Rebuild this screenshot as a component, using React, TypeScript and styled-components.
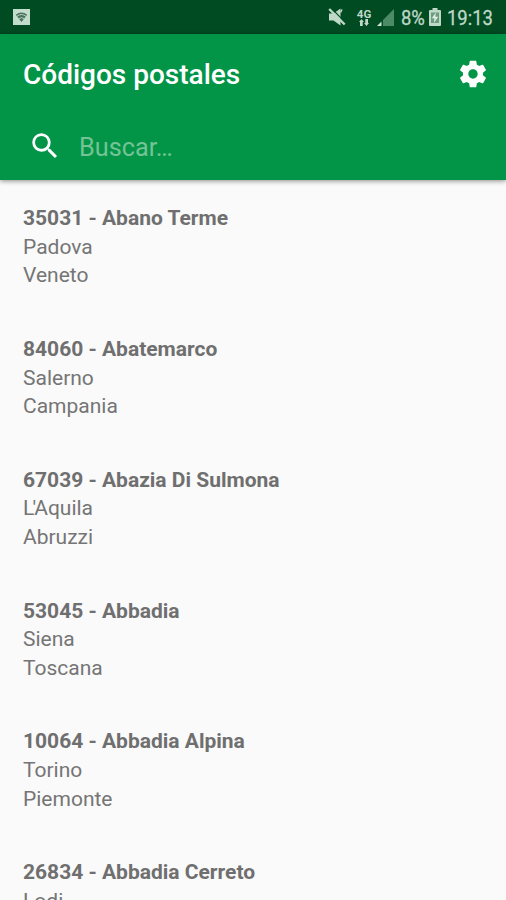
import React from "react";
import styled, { createGlobalStyle } from "styled-components";

const GlobalStyle = createGlobalStyle`
  * { box-sizing: border-box; }
  html, body { margin: 0; height: 100%; overflow: hidden; background: #fafafa; }
  body { font-family: Roboto, sans-serif; }
`;

const Screen = styled.div`
  width: 506px;
  height: 900px;
  overflow: hidden;
  display: flex;
  flex-direction: column;
  background: #fafafa;
`;

const StatusBar = styled.div`
  flex: none;
  height: 34px;
  padding: 0 12px 0 13px;
  display: flex;
  align-items: center;
  background: #004b22;
  color: #bfd8c8;
  svg { display: block; flex: none; }
`;

const Spacer = styled.div<{ $w?: number }>`
  flex: ${(p) => (p.$w ? `0 0 ${p.$w}px` : "1")};
`;

const StatusText = styled.span<{ $width: number }>`
  width: ${(p) => p.$width}px;
  font-size: 20.5px;
  line-height: 34px;
  padding-top: 2px;
  white-space: nowrap;
  transform: scaleX(0.9);
  transform-origin: left center;
  -webkit-text-stroke: 0.3px currentColor;
`;

const Network = styled.div`
  width: 16px;
  display: flex;
  flex-direction: column;
  align-items: center;
  font-size: 11.5px;
  font-weight: 700;
  line-height: 10px;
`;

const Header = styled.header`
  flex: none;
  height: 146px;
  background: #029548;
  color: #fff;
  box-shadow: 0 1px 5px rgba(0, 0, 0, 0.45);
`;

const TitleRow = styled.div`
  height: 79px;
  padding: 0 17px 0 23px;
  display: flex;
  align-items: center;
  justify-content: space-between;
`;

const Title = styled.h1`
  margin: 0;
  padding-top: 2px;
  font-size: 28px;
  font-weight: 500;
`;

const SearchRow = styled.label`
  height: 66px;
  padding: 0 28px;
  display: flex;
  align-items: center;
  gap: 17px;
`;

const SearchInput = styled.input`
  flex: 1;
  height: 40px;
  margin-top: 3px;
  padding: 0;
  border: 0;
  outline: 0;
  background: transparent;
  color: #fff;
  font: 400 25.3px Roboto, sans-serif;
  &::placeholder { color: #74c394; opacity: 1; }
`;

const IconButton = styled.button`
  padding: 0;
  border: 0;
  background: none;
  color: #fff;
  svg { display: block; }
`;

const List = styled.ul`
  margin: 0;
  padding: 24.2px 23px 0;
  list-style: none;
`;

const Item = styled.li`
  height: 130.8px;
  color: #757575;
  font-size: 21px;
  line-height: 28.6px;
  white-space: nowrap;
`;

const Name = styled.div`
  font-weight: 700;
  color: #6f6f6f;
`;

const TightPair = styled.span`
  letter-spacing: -1.9px;
`;

const places = [
  ["35031", "Abano Terme", "Padova", "Veneto"],
  ["84060", "Abatemarco", "Salerno", "Campania"],
  ["67039", "Abazia Di Sulmona", "L'Aquila", "Abruzzi"],
  ["53045", "Abbadia", "Siena", "Toscana"],
  ["10064", "Abbadia Alpina", "Torino", "Piemonte"],
  ["26834", "Abbadia Cerreto", "Lodi"],
];

// Tightens an elided article so that the apostrophe sits close to its neighbours.
const Province = ({ name }: { name: string }) =>
  name.startsWith("L'") ? (
    <div>
      <TightPair>L'</TightPair>
      {name.slice(2)}
    </div>
  ) : (
    <div>{name}</div>
  );

const WifiBadge = () => (
  <svg width="17" height="16" viewBox="0 0 17 16">
    <rect width="17" height="16" fill="#c3ddcd" />
    <path d="M2.8 5.8Q8.5 1.2 14.2 5.8L8.5 13Z" fill="#49735a" />
    <path d="M4 7.3Q8.5 3.7 13 7.3M6 9.6Q8.5 7.8 11 9.6" fill="none" stroke="#c3ddcd" strokeWidth="0.9" />
  </svg>
);

const MuteIcon = () => (
  <svg width="18" height="18" viewBox="0 0 18 18">
    <path d="M1 5.5H5.5L12.5 0.5V17.5L5.5 12.5H1Z" fill="#bfd8c8" />
    <path d="M12.5 4.5L14 1.5" stroke="#bfd8c8" strokeWidth="1.5" />
    <path d="M3.5 0.5L18 15" stroke="#004b22" strokeWidth="1.2" />
    <path d="M1.2 1L16.7 16.5" stroke="#bfd8c8" strokeWidth="2.4" />
  </svg>
);

const TrafficArrows = () => (
  <svg width="14" height="7" viewBox="0 0 14 7">
    <path d="M4.5 0L7 3H5.7V7H3V3H2ZM9.5 7L7 4H8.3V0H11V4H12Z" fill="#bfd8c8" />
  </svg>
);

const SignalIcon = () => (
  <svg width="17" height="17" viewBox="0 0 17 17">
    <path d="M17 0V17H6V11Z" fill="#4d8a66" />
    <path d="M4.5 12.5V17H0Z" fill="#cfe4d7" />
  </svg>
);

const BatteryIcon = () => (
  <svg width="12" height="18" viewBox="0 0 12 18">
    <path d="M3.5 0H8.5V2H11Q12 2 12 3V17Q12 18 11 18H1Q0 18 0 17V3Q0 2 1 2H3.5Z" fill="#bfd8c8" />
    <rect x="2" y="4.5" width="8" height="10.5" fill="#6d9c80" />
    <path d="M6.8 4.5L2.8 10.3H5.5L4.8 15L9.2 8.8H6.4Z" fill="#e0eee5" />
  </svg>
);

const SearchIcon = () => (
  <svg width="34" height="34" viewBox="0 0 24 24" fill="currentColor">
    <path d="M15.5 14h-.79l-.28-.27A6.47 6.47 0 0 0 16 9.5 6.5 6.5 0 1 0 9.5 16c1.61 0 3.09-.59 4.23-1.57l.27.28v.79l5 4.99L20.49 19l-4.99-5zm-6 0C7.01 14 5 11.99 5 9.5S7.01 5 9.5 5 14 7.01 14 9.5 11.99 14 9.5 14z" />
  </svg>
);

const SettingsIcon = () => (
  <svg width="32" height="32" viewBox="0 0 24 24" fill="currentColor">
    <path d="M19.43 12.98c.04-.32.07-.64.07-.98s-.03-.66-.07-.98l2.11-1.65c.19-.15.24-.42.12-.64l-2-3.46c-.12-.22-.39-.3-.61-.22l-2.49 1c-.52-.4-1.08-.73-1.69-.98l-.38-2.65C14.46 2.18 14.25 2 14 2h-4c-.25 0-.46.18-.49.42l-.38 2.65c-.61.25-1.17.59-1.69.98l-2.49-1c-.23-.09-.49 0-.61.22l-2 3.46c-.13.22-.07.49.12.64l2.11 1.65c-.04.32-.07.65-.07.98s.03.66.07.98l-2.11 1.65c-.19.15-.24.42-.12.64l2 3.46c.12.22.39.3.61.22l2.49-1c.52.4 1.08.73 1.69.98l.38 2.65c.03.24.24.42.49.42h4c.25 0 .46-.18.49-.42l.38-2.65c.61-.25 1.17-.59 1.69-.98l2.49 1c.23.09.49 0 .61-.22l2-3.46c.12-.22.07-.49-.12-.64l-2.11-1.65zM12 15.5c-1.93 0-3.5-1.57-3.5-3.5s1.57-3.5 3.5-3.5 3.5 1.57 3.5 3.5-1.57 3.5-3.5 3.5z" />
  </svg>
);

export default function App() {
  return (
    <Screen>
      <GlobalStyle />
      <StatusBar>
        <WifiBadge />
        <Spacer />
        <MuteIcon />
        <Spacer $w={10} />
        <Network>
          <span>4G</span>
          <TrafficArrows />
        </Network>
        <Spacer $w={5} />
        <SignalIcon />
        <Spacer $w={7} />
        <StatusText $width={28}>8%</StatusText>
        <BatteryIcon />
        <Spacer $w={6} />
        <StatusText $width={47}>19:13</StatusText>
      </StatusBar>
      <Header>
        <TitleRow>
          <Title>Códigos postales</Title>
          <IconButton aria-label="Ajustes">
            <SettingsIcon />
          </IconButton>
        </TitleRow>
        <SearchRow>
          <SearchIcon />
          <SearchInput placeholder="Buscar…" />
        </SearchRow>
      </Header>
      <List>
        {places.map(([code, town, province, region]) => (
          <Item key={code}>
            <Name>{code} - {town}</Name>
            <Province name={province} />
            {region && <div>{region}</div>}
          </Item>
        ))}
      </List>
    </Screen>
  );
}
